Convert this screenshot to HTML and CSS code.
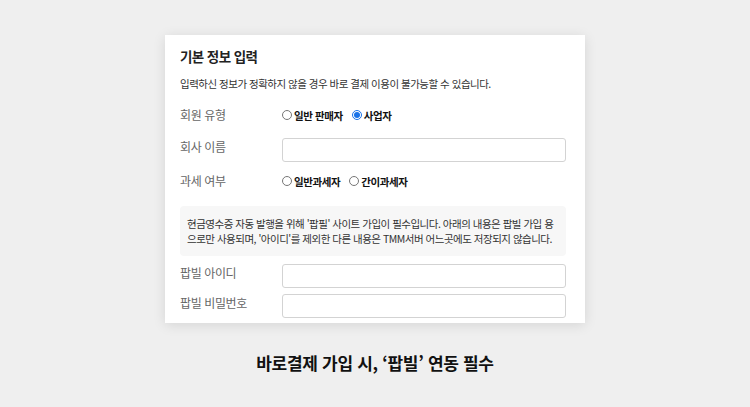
FILE: index.html
```html
<!DOCTYPE html>
<html lang="ko">
<head>
<meta charset="utf-8">
<link rel="stylesheet" href="styles.css">
</head>
<body>
<div class="page">
  <section class="card">
    <h1 class="title">기본 정보 입력</h1>
    <p class="desc">입력하신 정보가 정확하지 않을 경우 바로 결제 이용이 불가능할 수 있습니다.</p>
    <div class="row row-radio first">
      <span class="label">회원 유형</span>
      <div class="opts">
        <label class="opt"><input type="radio" name="t1"><span>일반 판매자</span></label>
        <label class="opt"><input type="radio" name="t1" checked><span>사업자</span></label>
      </div>
    </div>
    <div class="row row-input company">
      <span class="label">회사 이름</span>
      <input class="field" type="text">
    </div>
    <div class="row row-radio tax">
      <span class="label">과세 여부</span>
      <div class="opts">
        <label class="opt"><input type="radio" name="t2"><span>일반과세자</span></label>
        <label class="opt"><input type="radio" name="t2"><span>간이과세자</span></label>
      </div>
    </div>
    <div class="notice">현금영수증 자동 발행을 위해 '팝필' 사이트 가입이 필수입니다. 아래의 내용은 팝빌 가입 용<br>으로만 사용되며, '아이디'를 제외한 다른 내용은 TMM서버 어느곳에도 저장되지 않습니다.</div>
    <div class="row row-input popbill-id">
      <span class="label">팝빌 아이디</span>
      <input class="field" type="text">
    </div>
    <div class="row row-input popbill-pw">
      <span class="label">팝빌 비밀번호</span>
      <input class="field" type="password">
    </div>
  </section>
  <p class="caption">바로결제 가입 시, ‘팝빌’ 연동 필수</p>
</div>
</body>
</html>
```

FILE: styles.css
```css
* { box-sizing: border-box; }
html, body { margin: 0; padding: 0; }
body {
  background: #efefef;
  font-family: "Noto Sans CJK KR", "Noto Sans", sans-serif;
  color: #222;
  width: 750px;
  height: 407px;
  overflow: hidden;
}
.page {
  padding-top: 35px;
  display: flex;
  flex-direction: column;
  align-items: center;
}
.card {
  width: 420px;
  height: 288px;
  background: #fff;
  box-shadow: 0 2px 12px rgba(0,0,0,0.11);
  padding: 10px 19px 0 15px;
}
.title {
  margin: 0;
  font-size: 13.5px;
  letter-spacing: -0.6px;
  font-weight: 700;
  line-height: 22px;
  color: #222;
}
.desc {
  margin: 9px 0 0;
  font-size: 10.5px;
  letter-spacing: -0.5px;
  line-height: 16px;
  color: #333;
}
.row {
  display: flex;
  align-items: center;
}
.label {
  width: 102px;
  flex: none;
  font-size: 12px;
  letter-spacing: -0.4px;
  color: #666;
  line-height: 18px;
}
.row-radio { height: 18px; }
.row-input { align-items: flex-start; }
.first { margin-top: 14px; }
.company { margin-top: 14px; }
.tax { margin-top: 10px; }
.popbill-id { margin-top: 8px; }
.popbill-pw { margin-top: 6px; }
.opts { display: flex; gap: 9px; }
.opt {
  display: flex;
  align-items: center;
  font-size: 10.5px;
  letter-spacing: -0.4px;
  font-weight: 700;
  color: #111;
}
.opt input {
  margin: 0 2px 0 0;
  width: 10px;
  height: 10px;
  accent-color: #1a73e8;
}
.field {
  width: 284px;
  height: 24px;
  border: 1px solid #d3d3d3;
  border-radius: 3px;
  background: #fff;
  margin: 0;
}
.notice {
  margin-top: 16px;
  width: 386px;
  height: 50px;
  background: #f7f7f7;
  border-radius: 4px;
  padding: 10px 7px;
  font-size: 10.5px;
  letter-spacing: -0.5px;
  line-height: 15px;
  color: #333;
  white-space: nowrap;
}
.caption {
  margin: 27px 0 0;
  font-size: 17px;
  letter-spacing: -0.3px;
  font-weight: 700;
  color: #111;
  line-height: 26px;
}
```
